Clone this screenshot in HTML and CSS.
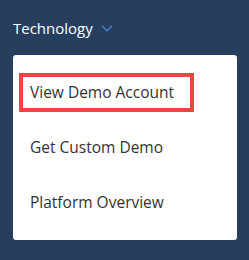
FILE: index.html
```html
<!DOCTYPE html>
<html lang="en">
<head>
    <meta charset="UTF-8">
    <meta name="viewport" content="width=device-width, initial-scale=1.0">
    <title>Technology menu</title>
    <link rel="stylesheet" href="styles.css">
</head>
<body>

    <!-- Menu trigger -->
    <div class="menu-titulo">
        <span>Technology</span>
        <svg class="seta" width="12" height="7" viewBox="0 0 12 7">
            <path d="M1 1 L6 5.8 L11 1" fill="none" stroke="#4a7fcf" stroke-width="1.5"/>
        </svg>
    </div>

    <!-- Dropdown -->
    <ul class="dropdown">
        <li><a class="item ativo" href="#">View Demo Account</a></li>
        <li><a class="item" href="#">Get Custom Demo</a></li>
        <li><a class="item" href="#">Platform Overview</a></li>
    </ul>

</body>
</html>
```

FILE: styles.css
```css
/* Estilos gerais */
body {
    font-family: 'Open Sans', sans-serif;
    background-color: #273f5f;
    margin: 0;
    padding: 0 12px 0 13px;
}

/* Titulo do menu */
.menu-titulo {
    display: flex;
    align-items: center;
    gap: 8px;
    height: 55px;
    color: #ffffff;
    font-size: 15px;
}

.menu-titulo .seta {
    margin-top: 2px;
}

/* Dropdown */
.dropdown {
    list-style: none;
    margin: 0;
    padding: 10px 0;
    background-color: #ffffff;
    border-radius: 3px;
    width: 224px;
}

.dropdown li {
    display: flex;
    align-items: center;
    height: 55px;
    padding-left: 6px;
}

.item {
    display: inline-block;
    padding: 0 16px 0 7px;
    line-height: 31px;
    border: 4px solid transparent;
    color: #333333;
    font-size: 15.5px;
    text-decoration: none;
}

.item.ativo {
    border-color: #f44343;
}
```
